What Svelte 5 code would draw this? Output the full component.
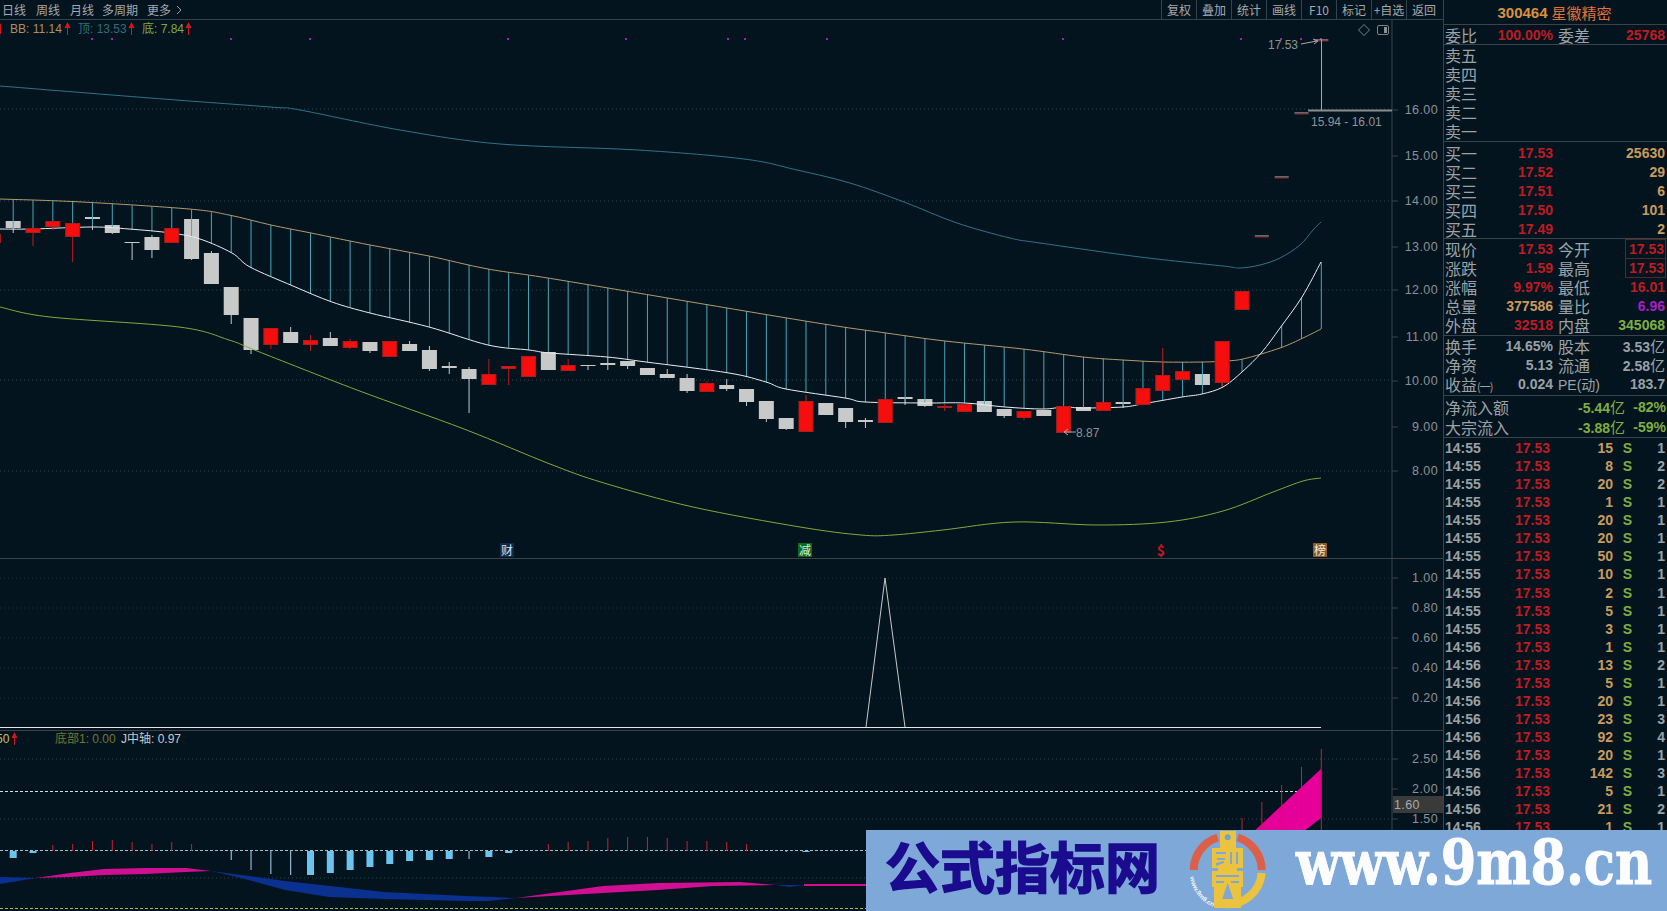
<script lang="ts">
  const stepX = 19.82;
  const xAt = (i: number) => 13.2 + stepX * i;

  // [index, red?, body top, body bottom, wick top, wick bottom]
  const candles: [number, number, number, number, number?, number?][] = [
    [-1, 1, 234, 242], [0, 0, 221, 228, 221, 233], [1, 1, 228, 232, 228, 246], [2, 1, 221, 226, 221, 230],
    [3, 1, 223, 236, 223, 262], [4, 0, 217, 219, 217, 230], [5, 0, 225, 233, 225, 234], [6, 0, 242, 243, 242, 260],
    [7, 0, 237, 250, 235, 258], [8, 1, 228, 242], [9, 0, 219, 259, 219, 260], [10, 0, 253, 284, 251, 284],
    [11, 0, 287, 315, 287, 324], [12, 0, 318, 350, 318, 354], [13, 1, 328, 344, 328, 349], [14, 0, 332, 343, 327, 343],
    [15, 1, 340, 344, 335, 351], [16, 0, 338, 346, 332, 346], [17, 1, 341, 347, 339, 349], [18, 0, 342, 351, 342, 353],
    [19, 1, 341, 356, 341, 357], [20, 0, 344, 351, 341, 351], [21, 0, 350, 369, 346, 371], [22, 0, 366, 368, 362, 374],
    [23, 0, 369, 379, 367, 413], [24, 1, 374, 384, 359, 384], [25, 1, 366, 368, 366, 385], [26, 1, 356, 376],
    [27, 0, 352, 370], [28, 1, 365, 370, 359, 370], [29, 0, 365, 366, 365, 370], [30, 0, 363, 365, 357, 370],
    [31, 0, 361, 366, 361, 369], [32, 0, 368, 375], [33, 0, 374, 378, 369, 378], [34, 0, 378, 391, 374, 393],
    [35, 1, 383, 391, 381, 391], [36, 0, 385, 389, 379, 391], [37, 0, 389, 402, 389, 406], [38, 0, 401, 419, 401, 422],
    [39, 0, 418, 429, 418, 430], [40, 1, 401, 431, 395, 431], [41, 0, 403, 415], [42, 0, 408, 422, 408, 428],
    [43, 0, 420, 422, 418, 428], [44, 1, 399, 422], [45, 0, 397, 399, 397, 405], [46, 0, 399, 406, 399, 407],
    [47, 1, 406, 407, 404, 411], [48, 1, 404, 411], [49, 0, 401, 412], [50, 0, 409, 416, 409, 418],
    [51, 1, 411, 417, 411, 420], [52, 0, 410, 416], [53, 1, 406, 432], [54, 0, 407, 411], [55, 1, 402, 410],
    [56, 0, 402, 404, 402, 408], [57, 1, 388, 404], [58, 1, 375, 390, 348, 390], [59, 1, 371, 379], [60, 0, 374, 385],
    [61, 1, 341, 382, 341, 387], [62, 1, 291, 309]
  ];

  const topBand = [[0,86],[150,98],[270,107],[300,110],[400,130],[500,144],[638,150],[744,159],[797,170],[850,183],[904,202],[957,223],[1010,238],[1040,243],[1140,257],[1223,266],[1240,268],[1260,265],[1280,258],[1300,245],[1313,230],[1321,222]];
  const orange = [[0,199],[82,202],[189,209],[229,215],[271,225],[311,233],[370,245],[429,256],[488,269],[560,280],[805,321],[886,333],[945,341],[1023,349],[1083,357],[1123,360],[1163,362],[1203,362],[1223,361],[1243,359],[1280,348],[1303,338],[1321,329]];
  const white = [[0,229],[32,229],[93,227],[129,229],[171,233],[200,239],[232,253],[250,267],[293,286],[332,302],[370,313],[429,327],[488,345],[529,350],[550,353],[607,357],[646,362],[729,373],[766,382],[786,389],[845,398],[865,402],[925,403],[965,403],[1005,407],[1043,409],[1064,407],[1083,408],[1123,407],[1142,404],[1182,397],[1202,394],[1223,387],[1242,372],[1262,352],[1280,328],[1302,297],[1321,262]];
  const lowBand = [[0,307],[50,317],[179,327],[229,340],[257,351],[357,390],[464,429],[550,464],[604,483],[693,507],[800,527],[861,535],[893,535],[943,530],[1014,522],[1097,525],[1167,522],[1223,511],[1273,492],[1303,481],[1321,478]];

  // catmull-rom through the sampled points, the bands are smooth curves
  function smooth(line: number[][]) {
    let d = `M${line[0][0]} ${line[0][1]}`;
    for (let k = 0; k < line.length - 1; k++) {
      const p0 = line[k - 1] ?? line[k];
      const p1 = line[k];
      const p2 = line[k + 1];
      const p3 = line[k + 2] ?? p2;
      const c1x = p1[0] + (p2[0] - p0[0]) / 6;
      const c1y = p1[1] + (p2[1] - p0[1]) / 6;
      const c2x = p2[0] - (p3[0] - p1[0]) / 6;
      const c2y = p2[1] - (p3[1] - p1[1]) / 6;
      d += `C${c1x} ${c1y} ${c2x} ${c2y} ${p2[0]} ${p2[1]}`;
    }
    return d;
  }

  function valueAt(line: number[][], x: number) {
    for (let k = 1; k < line.length; k++) {
      if (x <= line[k][0]) {
        const [x0, y0] = line[k - 1];
        const [x1, y1] = line[k];
        return y0 + ((y1 - y0) * (x - x0)) / (x1 - x0);
      }
    }
    return line[line.length - 1][1];
  }
  const bars = Array.from({ length: 67 }, (_, i) => xAt(i)).map((x) => ({
    x,
    y1: valueAt(orange, x),
    y2: valueAt(white, x)
  }));

  const priceTicks = [[16, 110], [15, 156], [14, 201], [13, 247], [12, 290], [11, 337], [10, 381], [9, 427], [8, 471]];
  const signalTicks = [['1.00', 578], ['0.80', 608], ['0.60', 638], ['0.40', 668], ['0.20', 698]];
  const purpleDots = [92, 112, 231, 310, 508, 626, 728, 745, 827, 1063, 1241, 1281, 1301, 1321];

  const redSticks = [[2,845],[3,844],[4,841],[5,840],[6,842],[7,844],[8,842],[9,844],[27,844],[28,842],[29,841],[30,838],[31,837],[32,837],[33,838],[34,841],[35,841],[36,842],[37,844],[62,818],[63,802],[64,785],[65,767],[66,749]];
  const blueBars = [[0,858],[1,853],[15,875],[16,873],[17,870],[18,867],[19,864],[20,861],[21,860],[22,859],[24,857],[25,853],[40,852]];
  const thinBars = [[11,860],[12,870],[13,874],[14,875],[23,859],[39,852]];

  const ribbons = [
    { c: 'blue', d: '0,877 36,878 0,884' },
    { c: 'pink', d: '36,878 70,873 104,869 145,868 186,868 211,871 186,872 145,874 104,875 70,877' },
    { c: 'blue', d: '211,871 241,875 285,881 384,892 466,896 516,898 488,901 466,901 384,899 329,897 285,890 241,878' },
    { c: 'pink', d: '516,898 603,886 658,883 740,882 776,885 713,886 658,890 603,893' },
    { c: 'blue', d: '776,885 804,885 790,887' },
    { c: 'pink', d: '804,884 870,884 870,886 804,886' },
    { c: 'hot', d: '1168,911 1321,769 1321,818 1290,842 1250,880' }
  ];

  const toolButtons = ['复权', '叠加', '统计', '画线', 'F10', '标记', '+自选', '返回'];
  const sells = ['卖五', '卖四', '卖三', '卖二', '卖一'];
  const buys = [['买一', '17.53', '25630'], ['买二', '17.52', '29'], ['买三', '17.51', '6'], ['买四', '17.50', '101'], ['买五', '17.49', '2']];
  const quoteA = [
    ['现价', '17.53', 'red', '今开', '17.53', 'red boxed'],
    ['涨跌', '1.59', 'red', '最高', '17.53', 'red boxed'],
    ['涨幅', '9.97%', 'red', '最低', '16.01', 'red'],
    ['总量', '377586', 'tan', '量比', '6.96', 'violet'],
    ['外盘', '32518', 'red', '内盘', '345068', 'green']
  ];
  const ticks = [
    ['14:55', 15, 1], ['14:55', 8, 2], ['14:55', 20, 2], ['14:55', 1, 1], ['14:55', 20, 1], ['14:55', 20, 1],
    ['14:55', 50, 1], ['14:55', 10, 1], ['14:55', 2, 1], ['14:55', 5, 1], ['14:55', 3, 1], ['14:56', 1, 1],
    ['14:56', 13, 2], ['14:56', 5, 1], ['14:56', 20, 1], ['14:56', 23, 3], ['14:56', 92, 4], ['14:56', 20, 1],
    ['14:56', 142, 3], ['14:56', 5, 1], ['14:56', 21, 2], ['14:56', 1, 1]
  ];
</script>

<div class="screen">
  <main class="chart-col">
    <nav class="toolbar">
      <div class="periods">
        <span>日线</span><span>周线</span><span>月线</span><span>多周期</span>
        <span>更多
          <svg class="chev" width="6" height="10" viewBox="0 0 6 10"><path d="M1 1l4 4-4 4" fill="none" stroke="#9aa0a4" /></svg>
        </span>
      </div>
      <div class="tools">
        {#each toolButtons as b}<span class="tool">{b}</span>{/each}
      </div>
    </nav>

    <!-- price pane -->
    <div class="pane price">
      <svg width="1443" height="538" viewBox="0 20 1443 538">
        {#each [109, 201, 290, 380, 471] as y}
          <line class="dots" x1="0" x2="1392" y1={y} y2={y} />
        {/each}
        <line class="axis" x1="1392" x2="1392" y1="20" y2="558" />
        {#each priceTicks as [v, y]}
          <line class="axis" x1="1392" x2="1398" y1={y} y2={y} />
          <text class="scale" x="1438" y={y + 4}>{v}.00</text>
        {/each}

        <!-- legend -->
        <path class="arrow" d="M1 23l-3 5h2v6h1z" />
        <text class="legend tan" x="10" y="33">BB: 11.14</text>
        <path class="arrow" d="M67.5 22l-3 6h2.500v7h1v-7h2.500z" />
        <text class="legend teal" x="78" y="33">顶: 13.53</text>
        <path class="arrow" d="M131.500 22l-3 6h2.500v7h1v-7h2.500z" />
        <text class="legend green" x="142" y="33">底: 7.84</text>
        <path class="arrow" d="M188.500 22l-3 6h2.500v7h1v-7h2.500z" />

        {#each purpleDots as x}
          <rect class="dot" x={x - 1} y="38" width="2" height="2" />
        {/each}

        <path class="diamond" d="M1364 24.500l5.500 5.500-5.500 5.500-5.500-5.500z" />
        <rect class="frame" x="1377.500" y="25.500" width="11" height="9" rx="1.500" />
        <rect x="1384" y="27" width="3" height="6" fill="#8a9094" />

        {#each candles as [i, red, top, bottom, wt, wb]}
          {#if !red}
            {@const x = xAt(i)}
            <line class="wick grey" x1={x} x2={x} y1={wt ?? top} y2={wb ?? bottom} />
            <rect class="body grey" x={x - 7.500} y={top} width="15" height={bottom - top} />
          {/if}
        {/each}

        {#each bars as b}
          <line class="bar" x1={b.x} x2={b.x} y1={b.y1} y2={b.y2} />
        {/each}

        <path class="ln teal" d={smooth(topBand)} />
        <path class="ln tan" d={smooth(orange)} />
        <path class="ln light" d={smooth(white)} />
        <path class="ln olive" d={smooth(lowBand)} />

        {#each candles as [i, red, top, bottom, wt, wb]}
          {#if red}
            {@const x = xAt(i)}
            <line class="wick red" x1={x} x2={x} y1={wt ?? top} y2={wb ?? bottom} />
            <rect class="body red" x={x - 7} y={top + 0.500} width="14" height={bottom - top} />
          {/if}
        {/each}

        <!-- one-price limit-up days -->
        {#each [[63, 236], [64, 177], [65, 113], [66, 40]] as [i, y]}
          <line class="limit-a" x1={xAt(i) - 7} x2={xAt(i) + 7} y1={y} y2={y} />
          <line class="limit-b" x1={xAt(i) - 7} x2={xAt(i) + 7} y1={y + 1} y2={y + 1} />
        {/each}

        <!-- extreme marks -->
        <line class="mark" x1="1321.500" x2="1321.500" y1="40" y2="110" />
        <line class="mark thick" x1="1308" x2="1392" y1="110.500" y2="110.500" />
        <text class="note" x="1268" y="49">17.53</text>
        <path class="mark" d="M1301 44l16-3M1313 39l5 2-4 3" />
        <text class="note" x="1311" y="126">15.94 - 16.01</text>
        <path class="mark" d="M1076 432h-12M1068 429l-4 3 4 3" />
        <text class="note" x="1076" y="437">8.87</text>

        <!-- event tags -->
        <rect x="500" y="543" width="14" height="14" fill="#0c2a4a" />
        <text class="tag" x="507" y="555" fill="#cfe4ff">财</text>
        <rect x="798" y="543" width="14" height="14" fill="#0b6a1c" />
        <text class="tag" x="805" y="555" fill="#d8f0d8">减</text>
        <text class="tag bold" x="1161" y="556" fill="#c8141e">$</text>
        <rect x="1313" y="543" width="14" height="14" fill="#8a5a2a" />
        <text class="tag" x="1320" y="555" fill="#f4ead8">榜</text>
      </svg>
    </div>

    <!-- signal pane -->
    <div class="pane signal">
      <svg width="1443" height="171" viewBox="0 559 1443 171">
        {#each signalTicks as [label, y]}
          <line class="dots faint" x1="0" x2="1392" y1={y} y2={y} />
          <line class="axis" x1="1392" x2="1398" y1={y} y2={y} />
          <text class="scale" x="1438" y={+y + 4}>{label}</text>
        {/each}
        <line class="axis" x1="1392" x2="1392" y1="559" y2="730" />
        <polyline class="ln spike" points="866,727 885,578 905,727" />
        <line class="base" x1="0" x2="1321" y1="727.500" y2="727.500" />
      </svg>
    </div>

    <!-- momentum pane -->
    <div class="pane momentum">
      <svg width="1443" height="180" viewBox="0 731 1443 180">
        <text class="legend yellow" x="-4" y="743">50</text>
        <path class="arrow" d="M14.500 732l-3 6h2.500v7h1v-7h2.500z" />
        <text class="legend dim" x="55" y="743">底部1: 0.00</text>
        <text class="legend pale" x="121" y="743">J中轴: 0.97</text>

        {#each [759, 819, 878] as y}
          <line class="dots" x1="0" x2="1392" y1={y} y2={y} />
        {/each}
        <line class="dash" x1="0" x2="1303" y1="791.500" y2="791.500" />
        <line class="dash cy" x1="0" x2="1321" y1="850.500" y2="850.500" />
        <line class="dash lime" x1="0" x2="1321" y1="908.500" y2="908.500" />

        <line class="axis" x1="1392" x2="1392" y1="731" y2="911" />
        {#each [['2.50', 759], ['2.00', 789], ['1.50', 819]] as [label, y]}
          <line class="axis" x1="1392" x2="1398" y1={y} y2={y} />
          <text class="scale" x="1438" y={+y + 4}>{label}</text>
        {/each}
        <rect x="1393" y="796" width="50" height="17" fill="#3a3a3a" />
        <text class="scale left" x="1394" y="809">1.60</text>

        {#each ribbons as r}
          <polygon class={r.c} points={r.d} />
        {/each}
        {#each redSticks as [i, y]}
          <line class="stick" x1={xAt(i)} x2={xAt(i)} y1={y} y2="851" />
        {/each}
        {#each thinBars as [i, y]}
          <line class="thin" x1={xAt(i)} x2={xAt(i)} y1="851" y2={y} />
        {/each}
        {#each blueBars as [i, y]}
          <rect class="sky" x={xAt(i) - 3.500} y="851" width="7" height={y - 851} />
        {/each}
      </svg>
    </div>
  </main>

  <aside class="quote">
    <header class="stock"><b>300464</b><span>星徽精密</span></header>

    <section class="block ratio">
      <div class="row"><span class="lb">委比</span><b class="red">100.00%</b><span class="lb gap">委差</span><b class="red">25768</b></div>
    </section>

    <section class="block book sells">
      {#each sells as s}
        <div class="row"><span class="lb">{s}</span></div>
      {/each}
    </section>

    <section class="block book buys">
      {#each buys as [l, p, v]}
        <div class="row"><span class="lb">{l}</span><b class="red">{p}</b><span class="gap"></span><b class="tan">{v}</b></div>
      {/each}
    </section>

    <section class="block stats">
      {#each quoteA as [l, v, c, l2, v2, c2]}
        <div class="row"><span class="lb">{l}</span><b class={c}>{v}</b><span class="lb gap">{l2}</span><b class={c2}>{v2}</b></div>
      {/each}
    </section>

    <section class="block fund">
      <div class="row"><span class="lb">换手</span><b class="grey">14.65%</b><span class="lb gap">股本</span><b class="grey">3.53<i>亿</i></b></div>
      <div class="row"><span class="lb">净资</span><b class="grey">5.13</b><span class="lb gap">流通</span><b class="grey">2.58<i>亿</i></b></div>
      <div class="row"><span class="lb nowrap">收益<small>(一)</small></span><b class="grey">0.024</b><span class="lb gap pe">PE(动)</span><b class="grey">183.7</b></div>
    </section>

    <section class="block flow">
      <div class="flow-row"><span class="lb">净流入额</span><b class="green">-5.44<i>亿</i></b><b class="green">-82%</b></div>
      <div class="flow-row"><span class="lb">大宗流入</span><b class="green">-3.88<i>亿</i></b><b class="green">-59%</b></div>
    </section>

    <section class="tape">
      {#each ticks as [t, qty, n]}
        <div class="tick"><b class="grey">{t}</b><b class="red">17.53</b><b class="tan">{qty}</b><b class="green">S</b><b class="grey">{n}</b></div>
      {/each}
    </section>
  </aside>
</div>

<!-- site watermark pasted over the screenshot -->
<div class="banner">
  <span class="cn">公式指标网</span>
  <svg class="logo" width="95" height="86" viewBox="0 0 95 86">
    <defs><path id="ringText" d="M10 52A38.500 38.500 0 0 0 40 84" /></defs>
    <path class="arc r" d="M37.700 12.500A34 34 0 0 0 13.700 45" />
    <path class="arc r" d="M57.700 12.500A34 34 0 0 1 81.700 45" />
    <path class="arc y" d="M81.700 48A34 34 0 0 1 45 79" />
    <path class="fig" d="M40 6h16v17h7v20h-6v3h6v16h-2v21H34V62h-2V46h6v-3h-6V23h8z" />
    <circle cx="47.700" cy="12.300" r="3" fill="#6fa5c8" />
    <path class="cut" d="M36 27h10v2H36zM50 27h2v12h-2zM56 27h2v12h-2zM37 33h8v2h-8zM36 38l8-2v2l-8 3zM36 50h23v2H36zM36 56h8v2h-8zM51 56h8v2h-8zM47.700 58l5.500 16h-11z" />
    <text class="ring-text"><textPath href="#ringText">www.9m8.cn</textPath></text>
  </svg>
  <span class="web">www.9m8.cn</span>
</div>

<style>
  :global(body) {
    margin: 0;
    background: #04141f;
    overflow: hidden;
  }

  .screen {
    display: flex;
    width: 1667px;
    height: 911px;
    overflow: hidden;
    background: #04141f;
    font-family: "Liberation Sans", "Noto Sans CJK SC", sans-serif;
  }

  /* left column */
  .chart-col {
    width: 1443px;
    flex: none;
    display: flex;
    flex-direction: column;
  }

  .toolbar {
    height: 19px;
    flex: none;
    display: flex;
    justify-content: space-between;
    border-bottom: 1px solid #34444a;
    font: 12px/19px "Noto Sans CJK SC", sans-serif;
    color: #a4a9ad;
  }

  .periods {
    display: flex;
    gap: 10px;
    padding-left: 2px;
  }

  .periods span:nth-child(4) {
    margin-left: -2px;
  }

  .periods span:nth-child(5) {
    margin-left: -1px;
  }

  .chev {
    margin-left: 2px;
  }

  .tools {
    display: flex;
    padding-right: 2px;
  }

  .tool {
    width: 34px;
    text-align: center;
    border-left: 1px solid #34444a;
  }

  .pane {
    flex: none;
    border-bottom: 1px solid #3a4448;
  }

  .pane svg {
    display: block;
  }

  .pane.momentum {
    border-bottom: 0;
  }

  /* chart bits */
  .dots {
    stroke: #2d4650;
    stroke-dasharray: 1 3;
  }

  .dots.faint {
    stroke: #1e333c;
  }

  .axis {
    stroke: #3a4448;
  }

  .scale {
    font: 12.500px "Liberation Sans", sans-serif;
    letter-spacing: 0.4px;
    fill: #8b9196;
    text-anchor: end;
  }

  .scale.left {
    text-anchor: start;
    fill: #a8aaac;
  }

  .legend {
    font: 12px "Liberation Sans", "Noto Sans CJK SC", sans-serif;
  }

  .legend.tan { fill: #b08d62; }
  .legend.teal { fill: #2f6d7c; }
  .legend.green { fill: #7fa83f; }
  .legend.yellow { fill: #c8c060; }
  .legend.dim { fill: #6e7a2e; }
  .legend.pale { fill: #c4c8cc; }

  .arrow { fill: #d01a1a; }
  .dot { fill: #a51fc0; }

  .diamond, .frame {
    fill: none;
    stroke: #7a8286;
  }

  .wick.grey { stroke: #c8c8c8; }
  .wick.red { stroke: #c01c1c; }
  .body.grey { fill: #c8c9c9; }

  .body.red {
    fill: #f60d0d;
    stroke: #a82018;
  }

  .bar {
    stroke: #4ca6b8;
  }

  .ln {
    fill: none;
    stroke-width: 1;
  }

  .ln.teal { stroke: #2d7486; }
  .ln.tan { stroke: #b39a6c; }
  .ln.light { stroke: #e8ecef; }
  .ln.olive { stroke: #8ca53a; }
  .ln.spike { stroke: #c8c8c8; }

  .limit-a { stroke: #c0c0c0; }
  .limit-b { stroke: #8e1f1f; }

  .mark {
    fill: none;
    stroke: #a4a8ac;
  }

  .mark.thick {
    stroke-width: 2;
    stroke: #8a8c8e;
  }

  .note {
    font: 12px "Liberation Sans", sans-serif;
    fill: #8e9498;
  }

  .tag {
    font: 12px "Noto Sans CJK SC", sans-serif;
    text-anchor: middle;
  }

  .tag.bold {
    font-weight: 700;
    font-size: 14px;
  }

  .base { stroke: #e4e4e4; }

  .dash {
    stroke: #d8dde0;
    stroke-dasharray: 3 2;
  }

  .dash.cy { stroke: #8fc8cc; }
  .dash.lime { stroke: #9fc050; }

  .pink { fill: #d10f93; }
  .hot { fill: #e6009a; }
  .blue { fill: #0a3090; }
  .stick { stroke: #c8202a; }
  .thin { stroke: #a8d8ee; }
  .sky { fill: #6cc4ee; }

  /* right column */
  .quote {
    width: 224px;
    flex: none;
    border-left: 1px solid #3a4448;
    display: flex;
    flex-direction: column;
    overflow: hidden;
  }

  .stock {
    height: 24px;
    flex: none;
    display: flex;
    justify-content: center;
    align-items: center;
    gap: 4px;
    padding-right: 3px;
    border-bottom: 1px solid #3a4448;
    font: 15px "Noto Sans CJK SC", sans-serif;
    color: #e07238;
  }

  .block {
    flex: none;
    border-bottom: 1px solid #3a4448;
    padding-left: 1px;
  }

  .row {
    display: grid;
    grid-template-columns: 32px 76px 37px 75px;
    align-items: center;
    height: 19px;
    white-space: nowrap;
  }

  .row b {
    justify-self: end;
  }

  .ratio { height: 19px; }
  .book { height: 97px; box-sizing: border-box; padding-top: 1px; }
  .sells { padding-top: 0; }
  .stats { height: 96px; }
  .stats .row { height: 19.200px; }
  .fund { height: 60px; box-sizing: border-box; padding-top: 1px; }
  .fund .row { height: 18.600px; }

  .lb {
    font: 16px/1 "Noto Sans CJK SC", sans-serif;
    color: #9ca2a6;
  }

  .lb small {
    font-size: 11px;
    letter-spacing: -1px;
  }

  .lb.gap, .gap {
    margin-left: 5px;
  }

  .pe {
    font: 14px "Liberation Sans", "Noto Sans CJK SC", sans-serif;
  }

  .quote b {
    font: bold 14px/1 "Liberation Sans", sans-serif;
  }

  .stock b {
    font-size: 15px;
    color: #d8923f;
  }

  .quote i {
    font: 15px/1 "Noto Sans CJK SC", sans-serif;
  }

  .quote .red { color: #bf1b22; }
  .quote .tan { color: #c89b5c; }
  .quote .green { color: #7fae3f; }
  .quote .grey { color: #9aa1a6; }
  .quote .violet { color: #a81fc4; }

  .boxed {
    outline: 1px solid #4e2a2c;
    padding: 2px 1px 2px 3px;
  }

  .flow {
    height: 41px;
  }

  .flow-row {
    display: grid;
    grid-template-columns: 1fr auto 41px;
    align-items: center;
    height: 19px;
    padding-right: 2px;
    margin-top: 1px;
  }

  .flow-row b:last-child {
    justify-self: end;
  }

  .tape {
    padding: 1px 0 0 1px;
  }

  .tick {
    display: grid;
    grid-template-columns: 35px 70px 63px 19px 33px;
    align-items: center;
    height: 18.070px;
  }

  .tick b {
    justify-self: end;
  }

  .tick b:first-child {
    justify-self: start;
  }

  /* watermark */
  .banner {
    position: absolute;
    left: 866px;
    top: 830px;
    width: 801px;
    height: 81px;
    display: flex;
    align-items: flex-start;
    background: #7da8d8;
    overflow: hidden;
  }

  .cn {
    flex: none;
    margin: 1px 0 0 19px;
    width: 295px;
    font: 700 55px/66px "Noto Sans CJK SC", sans-serif;
    color: #1b0b8e;
    -webkit-text-stroke: 1.500px #1b0b8e;
    white-space: nowrap;
  }

  .logo {
    flex: none;
    margin-top: -5px;
  }

  .arc {
    fill: none;
    stroke-width: 8;
  }

  .arc.r { stroke: #dc6048; }
  .arc.y { stroke: #ebc33f; }
  .fig { fill: #ebc33f; }
  .cut { fill: #7da8d8; }

  .ring-text {
    font: 700 6.500px "Liberation Sans", sans-serif;
    fill: #f2f4f8;
  }

  .web {
    flex: none;
    margin: 0 0 0 21px;
    font: 700 62px/66px "DejaVu Serif", serif;
    color: #fdfdff;
    -webkit-text-stroke: 1px #fdfdff;
    white-space: nowrap;
    transform: scaleX(0.825);
    transform-origin: left center;
  }
</style>
